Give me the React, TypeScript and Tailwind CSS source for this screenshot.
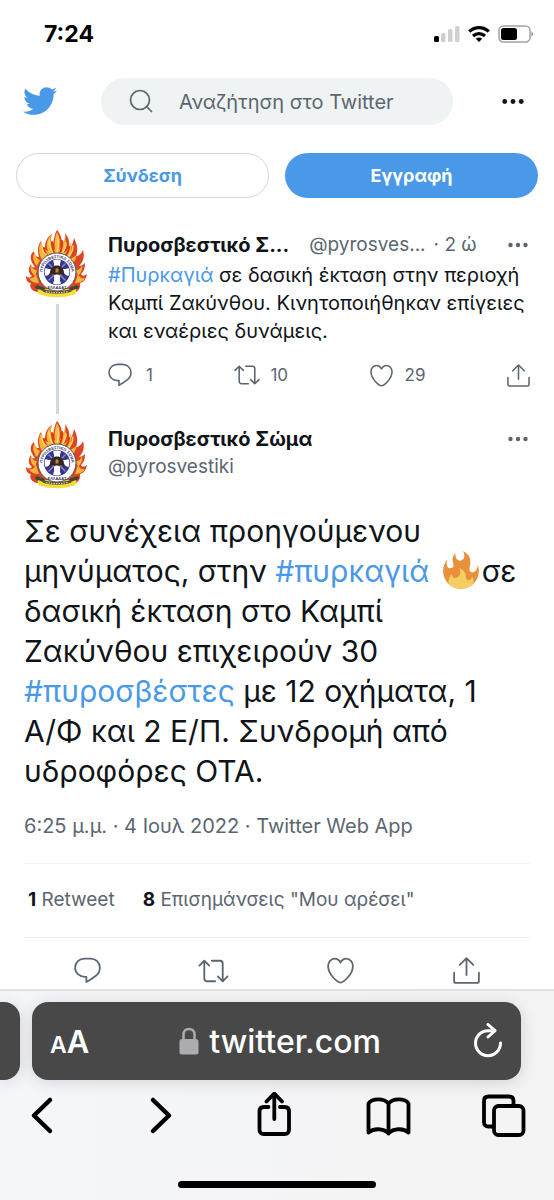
import type { ReactNode } from 'react'
import { FaTwitter } from 'react-icons/fa'

type IconProps = { className?: string }

function Outline({ className, children }: IconProps & { children: ReactNode }) {
    return (
        <svg
            viewBox="0 0 24 24"
            fill="none"
            stroke="currentColor"
            strokeWidth="1.6"
            strokeLinecap="round"
            strokeLinejoin="round"
            className={className}
            aria-hidden="true"
        >
            {children}
        </svg>
    )
}

function ReplyIcon({ className }: IconProps) {
    return (
        <Outline className={className}>
            <path d="M9.4 1.400H14.600c4.700 0 8.400 3.500 8.400 8.100 0 3-1.500 5.700-4.100 7.600-2.400 1.800-5.100 3.600-7.900 5.200v-4.700h-1.400C4.700 17.600 1 14.100 1 9.500 1 4.900 4.700 1.400 9.400 1.400z" />
        </Outline>
    )
}

function RetweetIcon({ className }: IconProps) {
    return (
        <svg
            viewBox="0 0 28 24"
            fill="none"
            stroke="currentColor"
            strokeWidth="1.7"
            strokeLinecap="round"
            strokeLinejoin="round"
            className={className}
            aria-hidden="true"
        >
            <path d="M1 7l4.500-4.500L10 7M5.500 2.800V19A2.500 2.500 0 0 0 8 21.500h7.500" />
            <path d="M12.500 2.500H20A2.500 2.500 0 0 1 22.500 5v16M18 17l4.500 4.500L27 17" />
        </svg>
    )
}

function HeartIcon({ className }: IconProps) {
    return (
        <Outline className={className}>
            <path d="M12 22.800C9.500 22.800 1 15.500 1 8.200 1 4.500 3.600 1.500 6.900 1.500c2.300 0 4.100 1.400 5.100 3.600 1-2.200 2.800-3.600 5.100-3.600 3.300 0 5.900 3 5.900 6.700 0 7.300-8.500 14.600-11 14.600z" />
        </Outline>
    )
}

function ShareIcon({ className }: IconProps) {
    return (
        <Outline className={className}>
            <path d="M12 16V1.200M6 7l6-6 6 6" />
            <path d="M1 14v7.500c0 .8.700 1.500 1.500 1.500h19c.8 0 1.500-.7 1.500-1.500V14" />
        </Outline>
    )
}

function DotsIcon({ className }: IconProps) {
    return (
        <svg viewBox="0 0 20 6" fill="currentColor" className={className} aria-hidden="true">
            <circle cx="2.500" cy="3" r="2.200" />
            <circle cx="10" cy="3" r="2.200" />
            <circle cx="17.500" cy="3" r="2.200" />
        </svg>
    )
}

function FlameEmoji() {
    return (
        <svg viewBox="0 0 36 38" className="mr-0.5 ml-1 inline-block h-[40px] w-[38px] align-[-9px]" role="img" aria-label="φωτιά">
            <path
                fill="#e8913a"
                d="M35 19c0-2.060-.367-4.039-1.040-5.868-.460 5.389-3.333 8.157-6.335 6.868-2.812-1.208-.917-5.917-.777-8.164.236-3.809-.012-8.169-6.931-11.794 2.875 5.500.333 8.917-2.333 9.125-2.958.231-5.667-2.542-4.667-7.042-3.238 2.386-3.332 6.402-2.333 9 1.042 2.708-.042 4.958-2.583 5.208-2.840.280-4.418-3.041-2.963-8.333C2.520 10.965 1 14.805 1 19c0 9.389 7.611 17 17 17s17-7.611 17-17z"
            />
            <path
                fill="#f6cd62"
                d="M28.394 23.999c.148 3.084-2.561 4.293-4.019 3.709-2.106-.843-1.541-2.291-2.083-5.291s-2.625-5.083-5.708-6c2.250 6.333-1.247 8.667-3.080 9.084-1.872.426-3.753-.001-3.968-4.007C7.352 23.668 6 26.676 6 30c0 .368.023.730.055 1.090C9.125 34.124 13.342 36 18 36s8.875-1.876 11.945-4.910c.032-.360.055-.722.055-1.090 0-2.187-.584-4.236-1.606-6.001z"
            />
        </svg>
    )
}

function Avatar({ id }: { id: string }) {
    return (
        <svg viewBox="0 0 66 69" className="h-[69px] w-[66px] shrink-0" role="img" aria-label="Πυροσβεστικό Σώμα">
            <path
                fill="#dc4523"
                d="M13 63C7 62 5 57 7 54c-4 0-5-4-5-7 2 2 4 2 6 0-4-3-4-8-1-12 0 3 2 4 4 3-5-6-6-12-1-16 0 4 2 6 5 6-2-7-1-12 2-16 1 5 2 7 4 7 0-6 2-11 7-14-2 5-1 8 1 10 1-6 2-11 4-14 4 5 5 9 5 14 3-3 4-7 3-11 4 5 5 10 4 15 3-1 4-5 5-10 4 8 4 13 2 18 3 0 5-2 7-6 2 7 0 12-4 16 2 0 4-1 6-3 0 5-1 8-4 11 1 2 3 2 6 0-1 5-3 8-7 9 1 5-2 9-7 10z"
            />
            <path
                fill="#f6b63a"
                d="M17 29c-3-7-2-12 0-16 1 6 3 8 7 9-3-7 0-13 3-16-1 8 1 11 4 15-1-7 0-13 2-18 4 7 3 13 2 18 3-4 5-9 6-13 2 6 0 12-2 16 4-1 6-5 8-11 1 7 1 12-2 17 3 0 6-3 8-5-1 5-3 9-6 10l-27 1zM5 49c3 1 6-1 7-4l3 9c-4 0-8-1-10-5zM61 49c-3 1-6-1-7-4l-3 9c4 0 8-1 10-5zM7 36c1 3 3 5 6 5l-2 6c-4-3-5-7-4-11zM58 36c-1 3-3 5-6 5l2 6c3-3 5-7 4-11zM11 23c0 5 3 7 5 8l-3 6c-4-4-5-10-2-14z"
            />
            <path
                fill="none"
                stroke="#d83a20"
                strokeWidth="2"
                strokeLinecap="round"
                d="M20 19c0 4 2 6 4 8M28 13c0 5 1 8 2 11M38 12c1 5-1 9-2 12M45 18c0 4-2 7-4 9"
            />
            <path
                fill="none"
                stroke="#fbe16d"
                strokeWidth="1.300"
                strokeLinecap="round"
                d="M18 17c0 5 3 8 5 9M25 12c0 6 2 9 4 12M34 9c1 6 0 11-1 15M42 14c0 5-2 8-4 11M49 17c0 5-2 8-4 10"
            />
            <path fill="#f5dc37" d="M14 60l38 0c1 4-1 6-4 6-8 3-22 3-30 0-3 0-5-2-4-6z" />
            <circle cx="33" cy="43" r="19" fill="#fff" stroke="#55506a" strokeWidth="1" />
            <circle cx="33" cy="43" r="13" fill="#34369a" />
            <path
                fill="#fff"
                d="M33 43L29 31.500q4-1.800 8 0zM33 43l11.500-4q1.800 4 0 8zM33 43l4 11.500q-4 1.800-8 0zM33 43l-11.500 4q-1.800-4 0-8z"
            />
            <path stroke="#fff" strokeWidth="6" d="M33 31v24M21 43h24" />
            <path stroke="#8d89ab" strokeWidth="1.500" strokeLinecap="round" d="M25 35l16 16M41 35L25 51" />
            <path fill="#39251f" d="M26 44c0-5 3-7.500 7-7.500s7 2.500 7 7.500l2 2.500c-6-1.500-12-1.500-18 0z" />
            <path fill="#a98750" d="M31.500 40l1.500-1 1.500 1v3.500h-3z" />
            <path id={id} fill="none" d="M19.800 49.500a14.500 14.500 0 1 1 26.400 0" />
            <text fill="#38344e" className="font-['Liberation_Sans',sans-serif] text-[4px] font-bold">
                <textPath href={`#${id}`} startOffset="50%" textAnchor="middle">
                    ΠΥΡΟΣΒΕΣΤΙΚΟ ΣΩΜΑ
                </textPath>
            </text>
            <text
                x="33"
                y="60"
                textAnchor="middle"
                fill="#38344e"
                className="font-['Liberation_Sans',sans-serif] text-[4px] font-bold"
            >
                ΕΛΛΑΔΑΣ
            </text>
            <path
                fill="none"
                stroke="#3b4932"
                strokeWidth="3.500"
                strokeLinecap="round"
                strokeDasharray="2 2.500"
                d="M13 58l6 2M53 58l-6 2"
            />
            <path fill="none" stroke="#59533f" strokeWidth="2.500" d="M19 61.500c8 2.500 20 2.500 28 0" />
            <path fill="none" stroke="#d9d5c0" strokeWidth="1" strokeDasharray="1.500 1" d="M22 62.500c7 1.500 15 1.500 22 0" />
        </svg>
    )
}

function StatusBar() {
    return (
        <div className="flex h-[67px] items-center justify-between pr-5 pl-11 text-black">
            <span className="text-[23px] leading-7 font-bold">7:24</span>
            <div className="flex items-center gap-2">
                <svg viewBox="0 0 26 18" className="h-[18px] w-[26px]" aria-hidden="true">
                    <rect x="0" y="11" width="5" height="6" rx="1.500" fill="#000" />
                    <rect x="7" y="8" width="4.500" height="9" rx="1.500" fill="#cfcfcf" />
                    <rect x="14" y="4" width="4.500" height="13" rx="1.500" fill="#cfcfcf" />
                    <rect x="21" y="1" width="4.500" height="16" rx="1.500" fill="#cfcfcf" />
                </svg>
                <svg viewBox="0 0 22 18" className="h-[18px] w-[22px]" fill="none" stroke="#000" aria-hidden="true">
                    <path strokeWidth="3.200" d="M1.200 6.500c5.600-5.300 14-5.300 19.600 0" />
                    <path strokeWidth="3.200" d="M5 11c3.500-3.200 8.500-3.200 12 0" />
                    <path fill="#000" stroke="none" d="M7.800 13.700c1.900-1.600 4.500-1.600 6.400 0L11 17z" />
                </svg>
                <svg viewBox="0 0 36 18" className="h-[18px] w-[36px]" aria-hidden="true">
                    <rect x="1" y="1" width="31" height="16" rx="4.500" fill="none" stroke="#a3a3a3" strokeWidth="1.500" />
                    <rect x="3" y="3" width="16" height="12" rx="2.500" fill="#000" />
                    <path fill="#8d8d8d" d="M33.500 6.500c2 .5 2 4.500 0 5z" />
                </svg>
            </div>
        </div>
    )
}

function SiteHeader() {
    return (
        <header>
            <div className="flex h-[68px] items-center pr-[30px] pl-[23px]">
                <a href="#home" aria-label="Twitter" className="text-[#4a99e9]">
                    <FaTwitter className="size-[34px]" />
                </a>
                <label className="mr-[49px] ml-11 flex h-[47px] min-w-0 flex-1 items-center gap-[26px] rounded-full bg-[#eff3f4] pl-7">
                    <svg
                        viewBox="0 0 24 24"
                        className="size-6 shrink-0 text-[#5b6670]"
                        fill="none"
                        stroke="currentColor"
                        strokeWidth="1.700"
                        strokeLinecap="round"
                        aria-hidden="true"
                    >
                        <circle cx="11" cy="11" r="9.500" />
                        <path d="M18 18l4.500 4.500" />
                    </svg>
                    <input
                        type="text"
                        aria-label="Αναζήτηση"
                        placeholder="Αναζήτηση στο Twitter"
                        className="w-full min-w-0 bg-transparent pt-0.5 text-[20px] outline-none placeholder:text-[#5b6670]"
                    />
                </label>
                <button type="button" aria-label="Περισσότερα" className="text-[#0f1419]">
                    <DotsIcon className="h-[7px] w-[22px]" />
                </button>
            </div>
            <div className="mt-[18px] grid grid-cols-2 gap-4 px-4 text-[18px] font-bold">
                <button type="button" className="h-[45px] rounded-full border border-[#cfd9de] text-[#4a99e9]">
                    Σύνδεση
                </button>
                <button type="button" className="h-[45px] rounded-full bg-[#4a99e9] text-white">
                    Εγγραφή
                </button>
            </div>
        </header>
    )
}

function ParentTweet() {
    return (
        <article className="flex min-h-[185px] gap-[18px]">
            <div className="flex flex-col items-center">
                <Avatar id="ring-parent" />
                <div className="mt-1.5 w-[3px] flex-1 bg-[#cfd9de]" />
            </div>
            <div className="min-w-0 flex-1">
                <div className="flex h-8 items-center text-[19px] text-[#5b6670]">
                    <span className="text-[20px] font-bold whitespace-nowrap text-[#0f1419]">Πυροσβεστικό Σ...</span>
                    <span className="ml-5 whitespace-nowrap">@pyrosves...</span>
                    <span className="ml-2 whitespace-nowrap">· 2 ώ</span>
                    <button type="button" aria-label="Περισσότερα" className="ml-auto pr-0.5">
                        <DotsIcon className="h-1.5 w-5" />
                    </button>
                </div>
                <p className="text-[20px] leading-7 whitespace-nowrap text-[#0f1419]">
                    <a href="#fire" className="text-[#4a99e9]">#Πυρκαγιά</a> σε δασική έκταση στην περιοχή
                    <br />
                    Καμπί Ζακύνθου. Κινητοποιήθηκαν επίγειες
                    <br />
                    και εναέριες δυνάμεις.
                </p>
                <div className="mt-[18px] flex items-center justify-between text-[17px] leading-6 text-[#5b6670]">
                    <button type="button" aria-label="Απάντηση" className="flex items-center gap-3.5">
                        <ReplyIcon className="size-6" />
                        1
                    </button>
                    <button type="button" aria-label="Retweet" className="flex items-center gap-2.5">
                        <RetweetIcon className="h-[22px] w-[26px]" />
                        10
                    </button>
                    <button type="button" aria-label="Μου αρέσει" className="flex items-center gap-3">
                        <HeartIcon className="size-[23px]" />
                        29
                    </button>
                    <button type="button" aria-label="Κοινοποίηση">
                        <ShareIcon className="size-[23px]" />
                    </button>
                </div>
            </div>
        </article>
    )
}

function MainTweet() {
    return (
        <article className="mt-1.5">
            <div className="flex gap-[18px]">
                <Avatar id="ring-main" />
                <div className="flex-1 pt-[5px] text-[19px] leading-7">
                    <div className="flex items-center justify-between text-[20px] text-[#0f1419]">
                        <span className="font-bold">Πυροσβεστικό Σώμα</span>
                        <button type="button" aria-label="Περισσότερα" className="pr-0.5 text-[#5b6670]">
                            <DotsIcon className="h-1.5 w-5" />
                        </button>
                    </div>
                    <div className="text-[#5b6670]">@pyrosvestiki</div>
                </div>
            </div>
            <p className="mt-[22px] text-[30px] leading-10 whitespace-nowrap text-[#0f1419]">
                Σε συνέχεια προηγούμενου
                <br />
                μηνύματος, στην <a href="#fire" className="text-[#4a99e9]">#πυρκαγιά</a> <FlameEmoji />σε
                <br />
                δασική έκταση στο Καμπί
                <br />
                Ζακύνθου επιχειρούν 30
                <br />
                <a href="#firefighters" className="text-[#4a99e9]">#πυροσβέστες</a> με 12 οχήματα, 1
                <br />
                Α/Φ και 2 Ε/Π. Συνδρομή από
                <br />
                υδροφόρες ΟΤΑ.
            </p>
            <div className="mt-[21px] pb-[23px] text-[20px] leading-7 text-[#5b6670]">
                6:25 μ.μ. · 4 Ιουλ 2022 · Twitter Web App
            </div>
            <div className="flex h-[75px] items-center gap-7 border-y border-[#eff3f4] pl-1 text-[19px] text-[#5b6670]">
                <span><b className="text-[#0f1419]">1</b> Retweet</span>
                <span><b className="text-[#0f1419]">8</b> Επισημάνσεις "Μου αρέσει"</span>
            </div>
            <div className="grid h-[51px] grid-cols-4 items-center justify-items-center pt-3.5 text-[#5b6670]">
                <button type="button" aria-label="Απάντηση"><ReplyIcon className="size-[27px]" /></button>
                <button type="button" aria-label="Retweet"><RetweetIcon className="h-[26px] w-[31px]" /></button>
                <button type="button" aria-label="Μου αρέσει"><HeartIcon className="size-[27px]" /></button>
                <button type="button" aria-label="Κοινοποίηση"><ShareIcon className="size-[27px]" /></button>
            </div>
        </article>
    )
}

function NavIcon({ children }: { children: ReactNode }) {
    return (
        <svg
            viewBox="0 0 45 45"
            className="size-[45px]"
            fill="none"
            stroke="currentColor"
            strokeWidth="3.800"
            strokeLinecap="round"
            strokeLinejoin="round"
            aria-hidden="true"
        >
            {children}
        </svg>
    )
}

function BrowserBar() {
    return (
        <footer className="border-t-2 border-[#e2e2e2] bg-linear-to-r from-[#f5f6f9] to-[#f3f3f3] pt-[11px]">
            <div className="flex gap-3 pr-[33px]">
                <div className="h-[78px] w-5 rounded-r-2xl bg-[#484848] shadow-[0_2px_16px_rgba(0,0,0,0.14)]" />
                <div className="flex h-[78px] flex-1 items-center justify-between rounded-2xl bg-[#484848] px-[18px] text-white shadow-[0_2px_16px_rgba(0,0,0,0.14)]">
                    <button type="button" aria-label="Μέγεθος κειμένου" className="flex items-baseline pt-0.5 font-semibold">
                        <span className="text-[23px]">A</span>
                        <span className="text-[31px]">A</span>
                    </button>
                    <div className="flex items-center gap-2.5 pr-0.5 text-[32px] font-medium">
                        <svg viewBox="0 0 20 28" className="h-7 w-5" aria-hidden="true">
                            <rect x="0.500" y="12" width="19" height="15.500" rx="2.500" fill="#acacb0" />
                            <path d="M4.500 13V7.500c0-7.500 11-7.500 11 0V13" fill="none" stroke="#acacb0" strokeWidth="2.500" />
                        </svg>
                        <span className="pt-0.5">twitter.com</span>
                    </div>
                    <button type="button" aria-label="Ανανέωση">
                        <svg
                            viewBox="0 0 30 36"
                            className="h-9 w-[30px]"
                            fill="none"
                            stroke="currentColor"
                            strokeWidth="3"
                            strokeLinecap="round"
                            strokeLinejoin="round"
                            aria-hidden="true"
                        >
                            <path d="M27.500 20A12.500 12.500 0 1 1 15 7.700h6" />
                            <path d="M15 1.500l7 6.200-7 6.300" />
                        </svg>
                    </button>
                </div>
            </div>
            <nav className="mt-3 flex items-center justify-between pr-7 pl-5 text-black">
                <button type="button" aria-label="Πίσω">
                    <NavIcon><path d="M30 8L14 23.500 30 39" strokeWidth="4.500" /></NavIcon>
                </button>
                <button type="button" aria-label="Εμπρός">
                    <NavIcon><path d="M18 8l16 15.500L18 39" strokeWidth="4.500" /></NavIcon>
                </button>
                <button type="button" aria-label="Κοινή χρήση">
                    <NavIcon>
                        <path d="M17.500 15H13c-3 0-4.500 1.500-4.500 4.500v18c0 3 1.500 4.500 4.500 4.500h20.500c3 0 4.500-1.500 4.500-4.500v-18c0-3-1.500-4.500-4.500-4.500H29" />
                        <path d="M23.300 27V2.500M15.500 9.500l7.800-8 7.700 8" />
                    </NavIcon>
                </button>
                <button type="button" aria-label="Σελιδοδείκτες">
                    <NavIcon>
                        <path d="M22.500 11.500C18 6 6 6 2.500 11.500v29c5-4.500 15-4.500 20 1 5-5.500 15-5.500 20-1v-29C39 6 27 6 22.500 11.500zM22.500 11.500v30" />
                    </NavIcon>
                </button>
                <button type="button" aria-label="Καρτέλες">
                    <NavIcon>
                        <path d="M12 34.500H7.500c-3 0-4.500-1.500-4.500-4.500V9c0-3 1.500-4.500 4.500-4.500H28c3 0 4.500 1.500 4.500 4.500v4.500" />
                        <rect x="13" y="14" width="29.500" height="29" rx="4.500" />
                    </NavIcon>
                </button>
            </nav>
            <div className="mx-auto mt-11 h-[7px] w-[198px] rounded-full bg-black" />
            <div className="h-3" />
        </footer>
    )
}

export default function App() {
    return (
        <div className="overflow-hidden bg-white font-['Inter','Liberation_Sans',sans-serif]">
            <StatusBar />
            <SiteHeader />
            <main className="mt-[31px] px-6">
                <ParentTweet />
                <MainTweet />
            </main>
            <BrowserBar />
        </div>
    )
}
